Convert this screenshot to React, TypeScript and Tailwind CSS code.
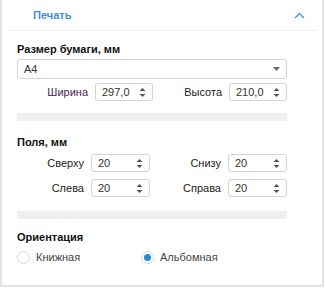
import React from "react";

function Spin({ value }: { value: string }) {
  return (
    <div className="flex items-center justify-between h-[18px] w-full rounded-[3px] border border-[#d4d4d4] bg-white pl-[6px] pr-[6px]">
      <span className="text-[11px] text-[#333] leading-none">{value}</span>
      <svg width="7" height="11" viewBox="0 0 7 11">
        <path d="M3.5 1 L6.5 4 L0.5 4 Z" fill="#555" />
        <path d="M0.5 7 L6.5 7 L3.5 10 Z" fill="#555" />
      </svg>
    </div>
  );
}

function Field({ label, value, lw, iw, color = "text-[#222]" }: { label: string; value: string; lw: string; iw: string; color?: string }) {
  return (
    <div className="flex items-center gap-[7px]">
      <span className={`${lw} text-right text-[11px] leading-none ${color}`}>{label}</span>
      <div className={iw}>
        <Spin value={value} />
      </div>
    </div>
  );
}

function Radio({ label, checked }: { label: string; checked?: boolean }) {
  return (
    <label className="flex items-center gap-[6px]">
      <span className="flex items-center justify-center w-[13px] h-[13px] rounded-full border border-[#d8d8d8] bg-white">
        {checked && <span className="w-[7px] h-[7px] rounded-full bg-[#2b88d4]" />}
      </span>
      <span className="text-[11px] text-[#444] leading-none">{label}</span>
    </label>
  );
}

export default function App() {
  return (
    <div className="w-[325px] h-[288px] bg-white" style={{ fontFamily: '"Liberation Sans", Arial, sans-serif' }}>
      <div className="w-[324px] h-[287px] border-x-2 border-b-2 border-[#e2e2e2]">
        {/* header */}
        <div className="mx-[5px] h-[31px] flex items-center justify-between border-b border-[#eeeeee] pl-[26px] pr-[12px]">
          <span className="text-[11px] font-bold text-[#3d8fd8] leading-none">Печать</span>
          <svg width="11" height="7" viewBox="0 0 11 7">
            <path d="M1 6 L5.5 1.5 L10 6" stroke="#4a94d8" strokeWidth="1.4" fill="none" />
          </svg>
        </div>

        <div className="pl-[15px] w-[285px]">
          <div className="pt-[12px] text-[11px] font-bold text-[#111] leading-[13px]">Размер бумаги, мм</div>
          <div className="mt-[3px] h-[20px] flex items-center justify-between rounded-[3px] border border-[#d4d4d4] pl-[6px] pr-[6px]">
            <span className="text-[11px] text-[#333] leading-none">А4</span>
            <svg width="7" height="4" viewBox="0 0 7 4">
              <path d="M0 0 L7 0 L3.5 4 Z" fill="#666" />
            </svg>
          </div>
          <div className="mt-[4px] flex items-center justify-between">
            <Field label="Ширина" value="297,0" lw="w-[71px]" iw="w-[58px]" color="text-[#4a2452]" />
            <Field label="Высота" value="210,0" lw="w-[61px]" iw="w-[58px]" />
          </div>
          <div className="mt-[12px] h-[8px] bg-[#efefef]" />

          <div className="pt-[15px] text-[11px] font-bold text-[#111] leading-[13px]">Поля, мм</div>
          <div className="mt-[5px] flex flex-col gap-[7px]">
            <div className="flex items-center justify-between">
              <Field label="Сверху" value="20" lw="w-[67px]" iw="w-[59px]" />
              <Field label="Снизу" value="20" lw="w-[61px]" iw="w-[59px]" />
            </div>
            <div className="flex items-center justify-between">
              <Field label="Слева" value="20" lw="w-[67px]" iw="w-[59px]" />
              <Field label="Справа" value="20" lw="w-[61px]" iw="w-[59px]" />
            </div>
          </div>
          <div className="mt-[14px] h-[8px] bg-[#efefef]" />

          <div className="pt-[12px] text-[11px] font-bold text-[#111] leading-[13px]">Ориентация</div>
          <div className="mt-[7px] flex items-center">
            <div className="w-[124px]">
              <Radio label="Книжная" />
            </div>
            <Radio label="Альбомная" checked />
          </div>
        </div>
      </div>
    </div>
  );
}
